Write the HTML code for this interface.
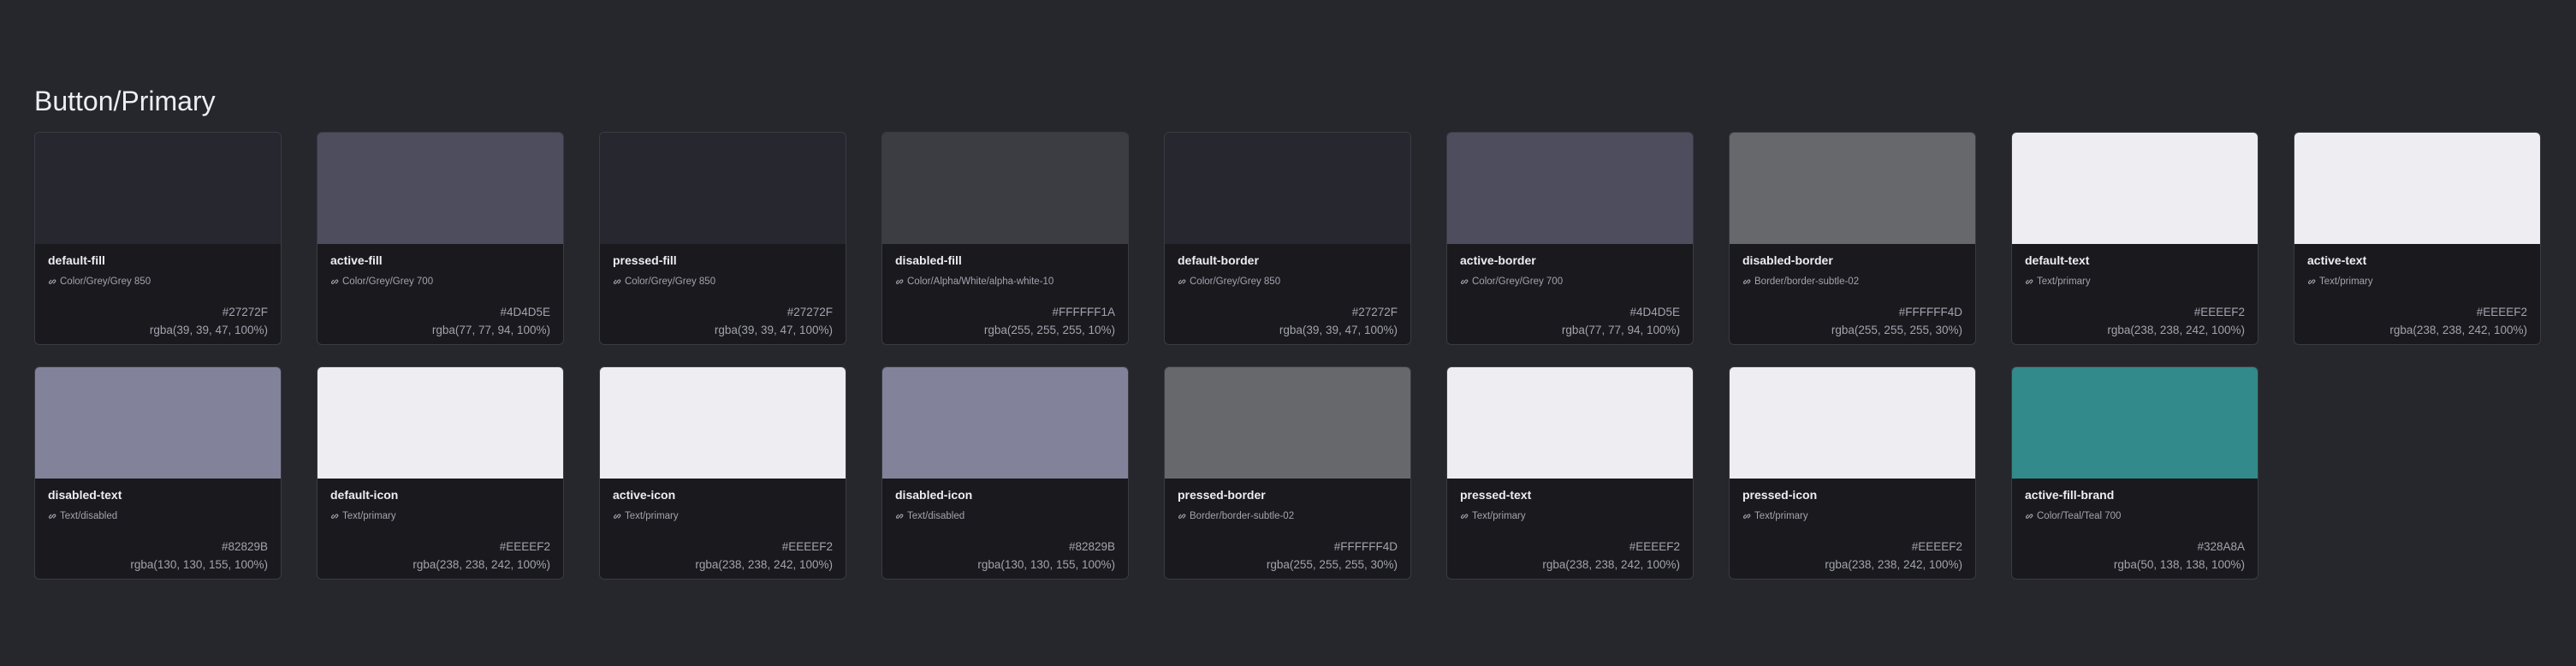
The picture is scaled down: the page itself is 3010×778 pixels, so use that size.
<!DOCTYPE html>
<html><head><style>
*{margin:0;padding:0;box-sizing:border-box}
body{width:3010px;height:778px;background:#26272d;font-family:"Liberation Sans",sans-serif;position:relative;overflow:hidden}
h1{position:absolute;left:40px;top:100px;font-size:32px;font-weight:400;color:#eeeef2;line-height:36px}
.c{position:absolute;width:289px;height:249px;border:1px solid #3a3b43;border-radius:6px;overflow:hidden;background:#19191e}
.s{height:130px}
.n{position:absolute;left:15px;top:141px;font-size:14px;font-weight:700;color:#eeeef2}
.a{position:absolute;left:15px;top:168px;font-size:11.5px;color:#a3a3ad;display:flex;align-items:center;gap:4px}
.a svg{width:10px;height:10px}
.h{position:absolute;right:15px;top:199px;font-size:13.5px;color:#a3a3ad;text-align:right;line-height:21px}
</style></head><body>
<h1>Button/Primary</h1>
<div id="g"></div>
<script>
var d=[
["default-fill","Color/Grey/Grey 850","#27272F","rgba(39, 39, 47, 100%)","#27272f"],
["active-fill","Color/Grey/Grey 700","#4D4D5E","rgba(77, 77, 94, 100%)","#4d4d5e"],
["pressed-fill","Color/Grey/Grey 850","#27272F","rgba(39, 39, 47, 100%)","#27272f"],
["disabled-fill","Color/Alpha/White/alpha-white-10","#FFFFFF1A","rgba(255, 255, 255, 10%)","#3c3d42"],
["default-border","Color/Grey/Grey 850","#27272F","rgba(39, 39, 47, 100%)","#27272f"],
["active-border","Color/Grey/Grey 700","#4D4D5E","rgba(77, 77, 94, 100%)","#4d4d5e"],
["disabled-border","Border/border-subtle-02","#FFFFFF4D","rgba(255, 255, 255, 30%)","#67686c"],
["default-text","Text/primary","#EEEEF2","rgba(238, 238, 242, 100%)","#eeeef2"],
["active-text","Text/primary","#EEEEF2","rgba(238, 238, 242, 100%)","#eeeef2"],
["disabled-text","Text/disabled","#82829B","rgba(130, 130, 155, 100%)","#82829b"],
["default-icon","Text/primary","#EEEEF2","rgba(238, 238, 242, 100%)","#eeeef2"],
["active-icon","Text/primary","#EEEEF2","rgba(238, 238, 242, 100%)","#eeeef2"],
["disabled-icon","Text/disabled","#82829B","rgba(130, 130, 155, 100%)","#82829b"],
["pressed-border","Border/border-subtle-02","#FFFFFF4D","rgba(255, 255, 255, 30%)","#67686c"],
["pressed-text","Text/primary","#EEEEF2","rgba(238, 238, 242, 100%)","#eeeef2"],
["pressed-icon","Text/primary","#EEEEF2","rgba(238, 238, 242, 100%)","#eeeef2"],
["active-fill-brand","Color/Teal/Teal 700","#328A8A","rgba(50, 138, 138, 100%)","#328a8a"]];
var ic='<svg viewBox="0 0 10 10" fill="none" stroke="#a3a3ad" stroke-width="1.1"><path d="M4.5 5.5 L6.8 3.2 a1.3 1.3 0 0 1 1.8 1.8 L6.3 7.3"/><path d="M5.5 4.5 L3.2 6.8 a1.3 1.3 0 0 0 1.8 1.8 L7.3 6.3" transform="translate(-1.5 -1.5)"/></svg>';
var h="";
d.forEach(function(e,i){var col=i%9,row=Math.floor(i/9);
h+='<div class="c" style="left:'+(40+col*330)+'px;top:'+(154+row*274)+'px"><div class="s" style="background:'+e[4]+'"></div><div class="n">'+e[0]+'</div><div class="a">'+ic+e[1]+'</div><div class="h">'+e[2]+'<br>'+e[3]+'</div></div>';});
document.getElementById("g").innerHTML=h;
</script>
</body></html>
